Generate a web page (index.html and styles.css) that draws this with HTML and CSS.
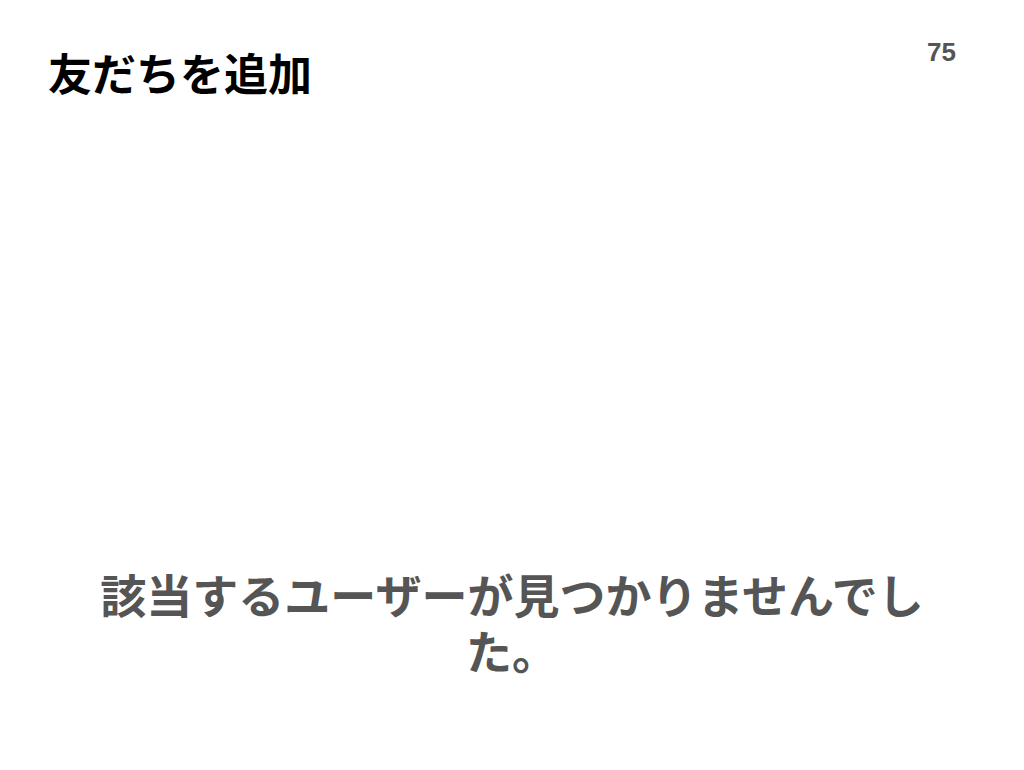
FILE: index.html
```html
<!DOCTYPE html>
<html lang="ja">
<head>
<meta charset="utf-8">
<link rel="stylesheet" href="styles.css">
</head>
<body>
<div class="screen">
  <header class="header">
    <h1 class="title">友だちを追加</h1>
    <span class="count">75</span>
  </header>
  <main class="content">
    <p class="empty">該当するユーザーが見つかりませんでした。</p>
  </main>
</div>
</body>
</html>
```
FILE: styles.css
```css
html, body {
  margin: 0;
  padding: 0;
  background: #ffffff;
}
.screen {
  width: 1024px;
  height: 770px;
  display: flex;
  flex-direction: column;
  font-family: "Noto Sans CJK JP", "Noto Sans", sans-serif;
}
.header {
  display: flex;
  justify-content: space-between;
  align-items: flex-start;
  padding: 0 68px 0 48px;
}
.title {
  margin: 43px 0 0 0;
  font-size: 44px;
  line-height: 58px;
  font-weight: 700;
  color: #000000;
  letter-spacing: 0;
}
.count {
  margin-top: 33px;
  font-family: "Liberation Sans", Arial, sans-serif;
  font-size: 26px;
  line-height: 38px;
  font-weight: 700;
  color: #555555;
}
.content {
  flex: 1;
  display: flex;
  flex-direction: column;
  justify-content: flex-end;
  padding-bottom: 93px;
}
.empty {
  width: 890px;
  margin: 0 auto;
  text-align: center;
  font-size: 46px;
  line-height: 56px;
  font-weight: 700;
  color: #555555;
}
```
